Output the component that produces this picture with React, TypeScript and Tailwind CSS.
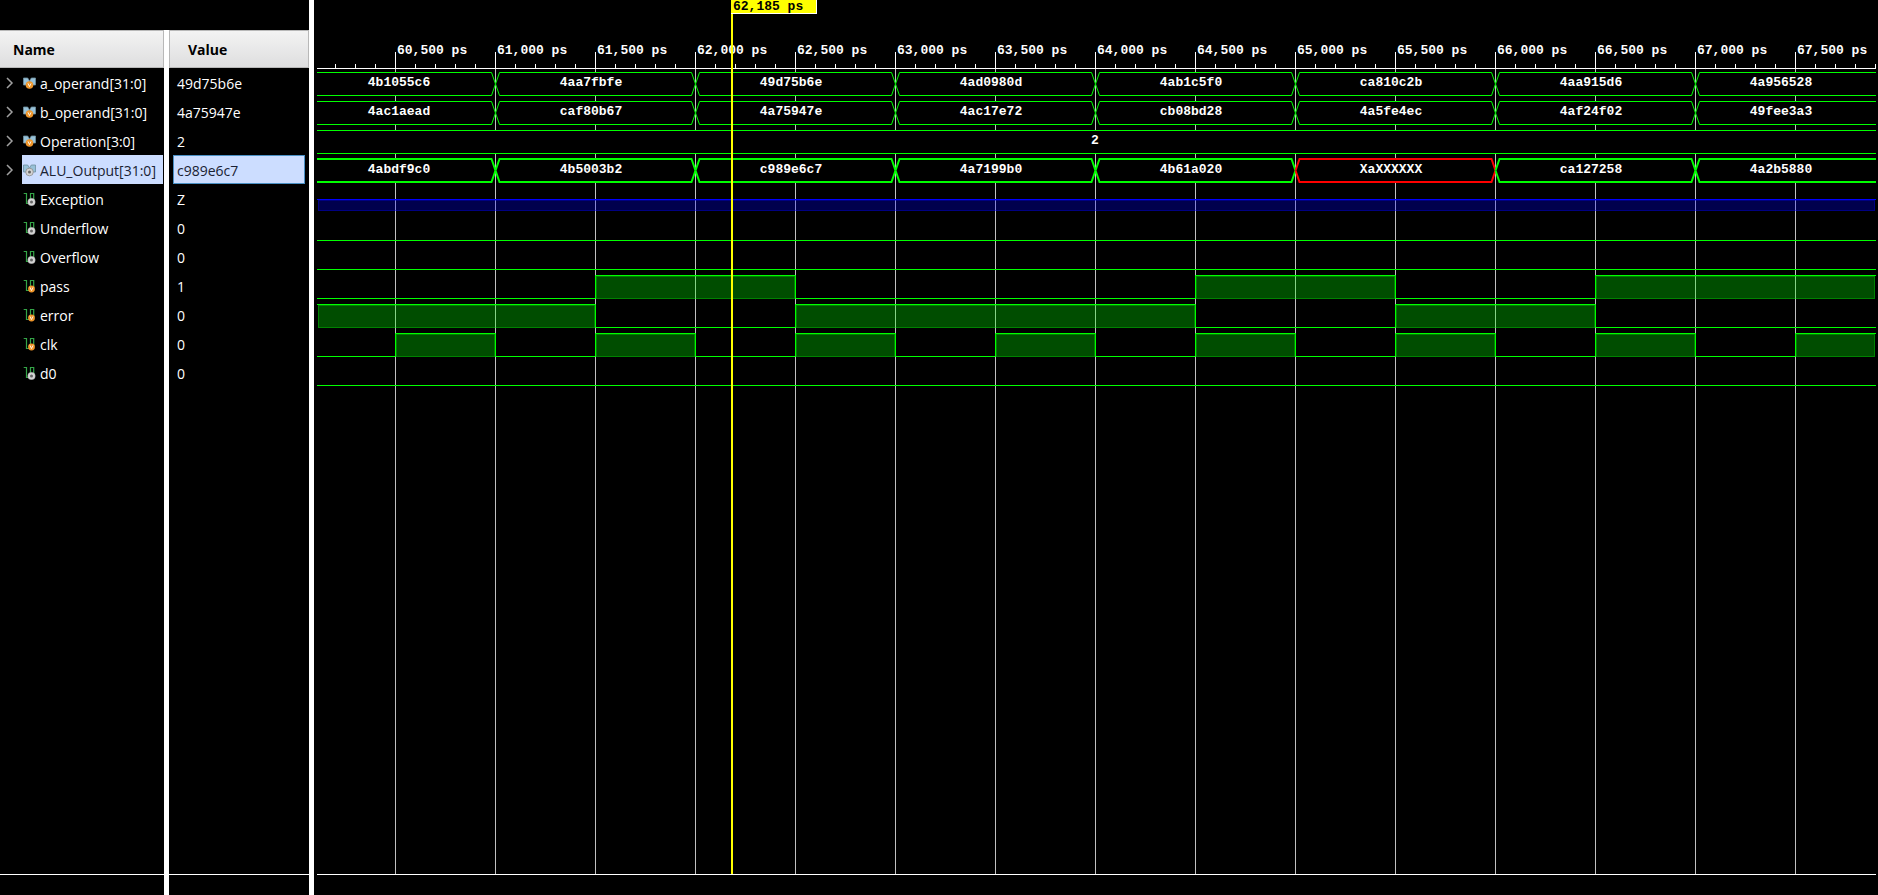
import { useLayoutEffect, useRef, useState } from "react";

type Kind = "bus" | "scalar";
type Badge = "var" | "net" | "muted";
type Signal = { name: string; value: string; kind: Kind; badge: Badge; selected?: boolean };

const SIGNALS: Signal[] = [
  { name: "a_operand[31:0]", value: "49d75b6e", kind: "bus", badge: "var" },
  { name: "b_operand[31:0]", value: "4a75947e", kind: "bus", badge: "var" },
  { name: "Operation[3:0]", value: "2", kind: "bus", badge: "var" },
  { name: "ALU_Output[31:0]", value: "c989e6c7", kind: "bus", badge: "muted", selected: true },
  { name: "Exception", value: "Z", kind: "scalar", badge: "net" },
  { name: "Underflow", value: "0", kind: "scalar", badge: "net" },
  { name: "Overflow", value: "0", kind: "scalar", badge: "net" },
  { name: "pass", value: "1", kind: "scalar", badge: "var" },
  { name: "error", value: "0", kind: "scalar", badge: "var" },
  { name: "clk", value: "0", kind: "scalar", badge: "var" },
  { name: "d0", value: "0", kind: "scalar", badge: "net" },
];

/* ---------- icons ---------- */

function BadgeMark({ cx, cy, r, badge }: { cx: number; cy: number; r: number; badge: Badge }) {
  if (badge === "var") {
    return (
      <>
        <circle cx={cx} cy={cy} r={r} fill="#f0962a" />
        <path d={`M${cx - 1.5} ${cy - 1.6}L${cx} ${cy + 1.6}L${cx + 1.5} ${cy - 1.6}`} fill="none" stroke="#fff3e0" strokeWidth={1} />
      </>
    );
  }
  return (
    <>
      <circle cx={cx} cy={cy} r={r} fill="#d4d4d4" stroke="#8d8d8d" strokeWidth={badge === "muted" ? 0.8 : 0.3} />
      <circle cx={cx} cy={cy} r={1.5} fill="#666" />
    </>
  );
}

function SignalIcon({ kind, badge }: { kind: Kind; badge: Badge }) {
  if (kind === "bus") {
    return (
      <svg width="14" height="14" viewBox="0 0 14 14" aria-hidden="true" className="shrink-0">
        <path d="M.5 2h4.2l1.500 2.500v3l-1.500 1.500H.5z" fill="#97c1d8" stroke="#6f8f9f" strokeWidth={0.8} />
        <path d="M12.500 2H8.300L6.800 4.500v3l1.500 1.500h4.200z" fill="#97c1d8" stroke="#6f8f9f" strokeWidth={0.8} />
        <BadgeMark cx={6.5} cy={9} r={3.8} badge={badge} />
      </svg>
    );
  }
  return (
    <svg width="14" height="14" viewBox="0 0 14 14" aria-hidden="true" className="shrink-0">
      <path d="M.7 1.500h2.800v10h4V1.500h3.200v8" fill="none" stroke="#34a547" strokeWidth={1.2} />
      <BadgeMark cx={8.500} cy={10} r={badge === "var" ? 3.4 : 3.8} badge={badge} />
    </svg>
  );
}

function Chevron() {
  return (
    <svg width="8" height="12" viewBox="0 0 8 12" aria-hidden="true">
      <path d="M1 1l5 5-5 5" fill="none" stroke="#a0a0a0" strokeWidth={1.5} />
    </svg>
  );
}

/* ---------- signal list ---------- */

function SignalRow({ signal }: { signal: Signal }) {
  const { name, value, kind, badge, selected } = signal;
  return (
    <tr className="h-[29px]">
      <td className="p-0">
        <div className="flex h-[29px] items-center">
          <div className="flex w-[22px] shrink-0 items-center pl-[6px]">
            {kind === "bus" && (
              <button type="button" aria-label={`Expand ${name}`} className="flex">
                <Chevron />
              </button>
            )}
          </div>
          <div
            className={
              selected
                ? "mr-px flex h-full flex-1 items-center gap-[3px] bg-[#ccddff] pl-px text-[#1a2233]"
                : "flex h-full flex-1 items-center gap-[3px] pl-px"
            }
          >
            <SignalIcon kind={kind} badge={badge} />
            <span className="pt-[2px] whitespace-nowrap">{name}</span>
          </div>
        </div>
      </td>
      <td className="border-l-[5px] border-white p-0 pr-1 pl-1">
        <div
          className={
            selected
              ? "flex h-[29px] items-center border border-[#4a90c4] bg-[#ccddff] pt-[2px] pl-[3px] text-[#1a2233]"
              : "flex h-[29px] items-center pt-[2px] pl-1"
          }
        >
          {value}
        </div>
      </td>
    </tr>
  );
}

function SignalList() {
  return (
    <div className="flex w-[309px] shrink-0 flex-col pt-[30px]">
      <table className="w-full table-fixed border-separate border-spacing-0 text-left">
        <colgroup>
          <col className="w-[164px]" />
          <col />
        </colgroup>
        <thead>
          <tr className="h-[38px] text-black">
            <th className="p-0 font-bold">
              <div className="flex h-[38px] items-center border border-l-0 border-[#b8b8b8] bg-linear-to-b from-[#f3f3f3] to-[#dededf] pt-[2px] pl-[13px]">
                Name
              </div>
            </th>
            <th className="border-l-[5px] border-white p-0 font-bold">
              <div className="flex h-[38px] items-center border border-[#b8b8b8] bg-linear-to-b from-[#f3f3f3] to-[#dededf] pt-[2px] pl-[18px]">
                Value
              </div>
            </th>
          </tr>
        </thead>
        <tbody>
          {SIGNALS.map((s) => (
            <SignalRow key={s.name} signal={s} />
          ))}
        </tbody>
      </table>
      <div className="flex flex-1">
        <div className="flex w-[164px] flex-col">
          <div className="flex-1 border-b border-white" />
          <div className="h-5" />
        </div>
        <div className="flex flex-1 flex-col border-l-[5px] border-white">
          <div className="flex-1 border-b border-white" />
          <div className="h-5" />
        </div>
      </div>
    </div>
  );
}

/* ---------- waveform ---------- */

const ORIGIN_PS = 60110;
const PX_PER_PS = 0.2;
const CURSOR_PS = 62185;
const AXIS_Y = 68;
const ROW = 29;
const SWING = 23;
const GREEN = "#00ff00";

const toX = (ps: number) => Math.round((ps - ORIGIN_PS) * PX_PER_PS);
const rowTop = (i: number) => 72 + ROW * i;

const BUS_EDGES = [61000, 62000, 63000, 64000, 65000, 66000, 67000];
const BUSES: { row: number; thick?: boolean; edges: number[]; values: string[] }[] = [
  { row: 0, edges: BUS_EDGES, values: ["4b1055c6", "4aa7fbfe", "49d75b6e", "4ad0980d", "4ab1c5f0", "ca810c2b", "4aa915d6", "4a956528"] },
  { row: 1, edges: BUS_EDGES, values: ["4ac1aead", "caf80b67", "4a75947e", "4ac17e72", "cb08bd28", "4a5fe4ec", "4af24f02", "49fee3a3"] },
  { row: 2, edges: [], values: ["2"] },
  { row: 3, thick: true, edges: BUS_EDGES, values: ["4abdf9c0", "4b5003b2", "c989e6c7", "4a7199b0", "4b61a020", "XaXXXXXX", "ca127258", "4a2b5880"] },
];

const BITS: { row: number; high: [number, number][] }[] = [
  { row: 5, high: [] },
  { row: 6, high: [] },
  { row: 7, high: [[61500, 62500], [64500, 65500], [66500, Infinity]] },
  { row: 8, high: [[-Infinity, 61500], [62500, 64500], [65500, 66500]] },
  { row: 9, high: [[60500, 61000], [61500, 62000], [62500, 63000], [63500, 64000], [64500, 65000], [65500, 66000], [66500, 67000], [67500, Infinity]] },
  { row: 10, high: [] },
];

function Bus({ row, thick, edges, values, end }: { row: number; thick?: boolean; edges: number[]; values: string[]; end: number }) {
  const shift = thick ? 0 : 0.5;
  const top = rowTop(row) + shift;
  const bottom = top + SWING;
  const mid = (top + bottom) / 2;
  return (
    <g>
      {values.map((value, i) => {
        const first = i === 0;
        const last = i === values.length - 1;
        const x0 = first ? 0 : toX(edges[i - 1]) + 0.5;
        const x1 = last ? end : toX(edges[i]) + 0.5;
        const left = first ? `M${x0} ${top}` : `M${x0} ${mid}L${x0 + 4} ${top}`;
        const right = last ? `H${x1}M${x1} ${bottom}` : `H${x1 - 4}L${x1} ${mid}L${x1 - 4} ${bottom}`;
        const close = first ? `H${x0}` : `H${x0 + 4}L${x0} ${mid}`;
        const leftPoints = first ? `${x0},${top} ${x0},${bottom}` : `${x0 + 4},${top} ${x0},${mid} ${x0 + 4},${bottom}`;
        const rightPoints = last ? `${x1},${bottom} ${x1},${top}` : `${x1 - 4},${bottom} ${x1},${mid} ${x1 - 4},${top}`;
        const labelStart = first ? -5 : x0;
        const labelX = Math.floor((labelStart + x1) / 2) - (values.length > 1 ? 4 : -1);
        return (
          <g key={value}>
            <polygon points={`${leftPoints} ${rightPoints}`} fill="#000" />
            <path d={left + right + close} fill="none" stroke={value.includes("X") ? "#ff0000" : GREEN} strokeWidth={thick ? 2 : 1} />
            <text x={labelX} y={rowTop(row) + 14} textAnchor="middle" fill="#fff">
              {value}
            </text>
          </g>
        );
      })}
    </g>
  );
}

function Bit({ row, high, end }: { row: number; high: [number, number][]; end: number }) {
  const hi = rowTop(row);
  const low = hi + SWING + 0.5;
  const spans = high.map(([a, b]) => [a === -Infinity ? 0 : toX(a), b === Infinity ? end : toX(b)]);
  let d = `M0 ${low}`;
  spans.forEach(([a, b]) => {
    if (a === 0) d = `M0 ${hi + 0.5}`;
    else d += `H${a + 0.5}V${hi + 0.5}`;
    if (b === end) d += `H${end}`;
    else d += `H${b + 0.5}V${low}`;
  });
  if (!spans.some(([, b]) => b === end)) d += `H${end}`;
  return (
    <g>
      {spans.map(([a, b]) => {
        const right = b === end ? b - 1 : b;
        return (
          <g key={a}>
            <rect x={a + 1} y={hi} width={Math.max(0, right - a - 1)} height={24} fill={GREEN} fillOpacity={0.3} />
            <rect x={a + 1.5} y={hi + 1.5} width={Math.max(0, right - a - 2)} height={22} fill="none" stroke={GREEN} strokeOpacity={0.3} />
          </g>
        );
      })}
      <path d={d} fill="none" stroke={GREEN} />
    </g>
  );
}

function Waveform() {
  const ref = useRef<HTMLDivElement>(null);
  const [size, setSize] = useState({ w: 1200, h: 800 });

  useLayoutEffect(() => {
    const el = ref.current;
    if (!el) return;
    const measure = () => setSize({ w: el.clientWidth, h: el.clientHeight });
    measure();
    const observer = new ResizeObserver(measure);
    observer.observe(el);
    return () => observer.disconnect();
  }, []);

  const { w, h } = size;
  const floor = h - 21;
  const count = Math.ceil(w / 20) + 1;
  const ticks = Array.from({ length: count }, (_, i) => 60200 + i * 100).filter((ps) => toX(ps) < w);
  const majors = ticks.filter((ps) => ps % 500 === 0);
  const cursor = toX(CURSOR_PS);

  return (
    <div ref={ref} className="min-w-0 flex-1 overflow-hidden">
      <svg
        width={w}
        height={h}
        role="img"
        aria-label="Simulation waveform"
        className="block font-['Liberation_Mono',monospace] text-[13px] font-bold"
      >
        {ticks.map((ps) => (
          <rect key={ps} x={toX(ps)} y={ps % 500 === 0 ? 52 : 64} width={1} height={ps % 500 === 0 ? 16 : 4} fill="#fff" />
        ))}
        {majors.map((ps) => (
          <g key={ps}>
            <rect x={toX(ps)} y={AXIS_Y} width={1} height={Math.max(0, floor - AXIS_Y)} fill="#c0c0c0" />
            <text x={toX(ps) + 2} y={54} fill="#fff">
              {ps.toLocaleString("en-US")} ps
            </text>
          </g>
        ))}
        <rect x={0} y={AXIS_Y} width={w} height={1} fill="#fff" />
        <rect x={0} y={floor} width={w} height={1} fill="#fff" />

        {BUSES.map((bus) => (
          <Bus key={bus.row} {...bus} end={w} />
        ))}

        <rect x={1} y={199} width={w - 2} height={12} fill="#0000ff" fillOpacity={0.3} />
        <rect x={1.5} y={200.5} width={w - 3} height={10} fill="none" stroke="#0000ff" strokeOpacity={0.3} />
        <rect x={0} y={199} width={w} height={1} fill="#0000ff" />

        {BITS.map((bit) => (
          <Bit key={bit.row} {...bit} end={w} />
        ))}

        <rect x={cursor - 1} y={0} width={2} height={Math.max(0, floor)} fill="#ffff00" />
        <rect x={cursor - 1} y={0} width={86} height={14} fill="#fff" />
        <rect x={cursor - 1} y={0} width={85} height={13} fill="#ffff00" />
        <text x={cursor + 1} y={10} fill="#000">
          {CURSOR_PS.toLocaleString("en-US")} ps
        </text>
      </svg>
    </div>
  );
}

export default function App() {
  return (
    <main className="flex h-screen min-h-[420px] overflow-hidden bg-black font-['Open_Sans',sans-serif] text-[14px] leading-5 text-white">
      <SignalList />
      <div className="w-[5px] shrink-0 bg-white" />
      <div className="flex min-w-0 flex-1 pr-[2px] pl-[3px]">
        <Waveform />
      </div>
    </main>
  );
}
